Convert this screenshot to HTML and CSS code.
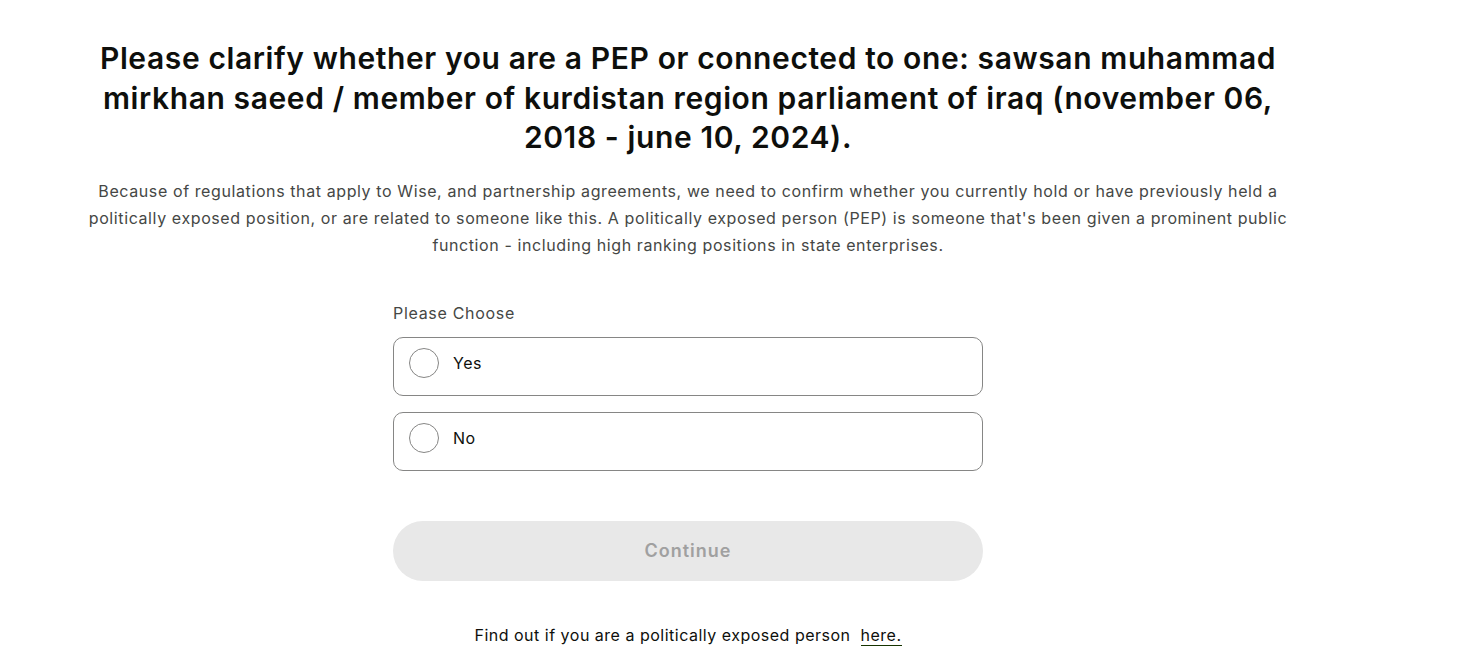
FILE: index.html
```html
<!DOCTYPE html>
<html lang="en">
<head>
<meta charset="utf-8">
<title>PEP</title>
<link rel="stylesheet" href="styles.css">
</head>
<body>
<main class="page">
  <h1 class="title">Please clarify whether you are a PEP or connected to one: sawsan muhammad mirkhan saeed / member of kurdistan region parliament of iraq (november 06, 2018 - june 10, 2024).</h1>
  <p class="lead">Because of regulations that apply to Wise, and partnership agreements, we need to confirm whether you currently hold or have previously held a politically exposed position, or are related to someone like this. A politically exposed person (PEP) is someone that's been given a prominent public function - including high ranking positions in state enterprises.</p>
  <form class="form">
    <div class="label">Please Choose</div>
    <div class="options">
      <label class="option"><span class="radio"></span><span class="option-text">Yes</span></label>
      <label class="option"><span class="radio"></span><span class="option-text">No</span></label>
    </div>
    <button type="button" class="btn" disabled>Continue</button>
  </form>
  <p class="foot">Find out if you are a politically exposed person &nbsp;<a class="link" href="#">here.</a></p>
</main>
</body>
</html>
```
FILE: styles.css
```css
* { box-sizing: border-box; }
html, body { margin: 0; padding: 0; background: #fff; }
body {
  font-family: Inter, "Noto Sans", Arial, sans-serif;
  color: #0e0f0c;
}
.page {
  width: 1200px;
  margin-left: 88px;
  padding-top: 39px;
  display: flex;
  flex-direction: column;
  align-items: center;
  text-align: center;
}
.title {
  margin: 0;
  font-size: 30px;
  font-weight: 600;
  line-height: 39.5px;
  letter-spacing: 0.6px;
}
.lead {
  margin: 20px 0 0;
  font-size: 16px;
  line-height: 27px;
  letter-spacing: 0.6px;
  color: #454745;
}
.form {
  width: 590px;
  margin-top: 42px;
  display: flex;
  flex-direction: column;
  text-align: left;
}
.label {
  font-size: 16px;
  line-height: 24px;
  letter-spacing: 0.7px;
  color: #454745;
}
.options {
  margin-top: 12px;
  display: flex;
  flex-direction: column;
  gap: 16px;
}
.option {
  height: 59px;
  border: 1px solid #868685;
  border-radius: 10px;
  display: flex;
  align-items: center;
  padding-left: 15px;
  padding-bottom: 6px;
  gap: 14px;
  cursor: pointer;
}
.radio {
  width: 30px;
  height: 30px;
  border: 1px solid #868685;
  border-radius: 50%;
  flex: none;
}
.option-text {
  font-size: 16px;
  line-height: 24px;
  letter-spacing: 0.5px;
  color: #0e0f0c;
}
.btn {
  margin-top: 50px;
  height: 60px;
  border: 0;
  border-radius: 30px;
  background: #e8e8e8;
  color: #a0a0a0;
  font-family: inherit;
  font-size: 18px;
  font-weight: 600;
  letter-spacing: 1px;
  width: 100%;
}
.foot {
  margin: 42px 0 0;
  font-size: 16px;
  line-height: 24px;
  letter-spacing: 0.5px;
  color: #0e0f0c;
}
.link {
  color: #0e0f0c;
  text-decoration: none;
  border-bottom: 1px solid #163300;
}
```
